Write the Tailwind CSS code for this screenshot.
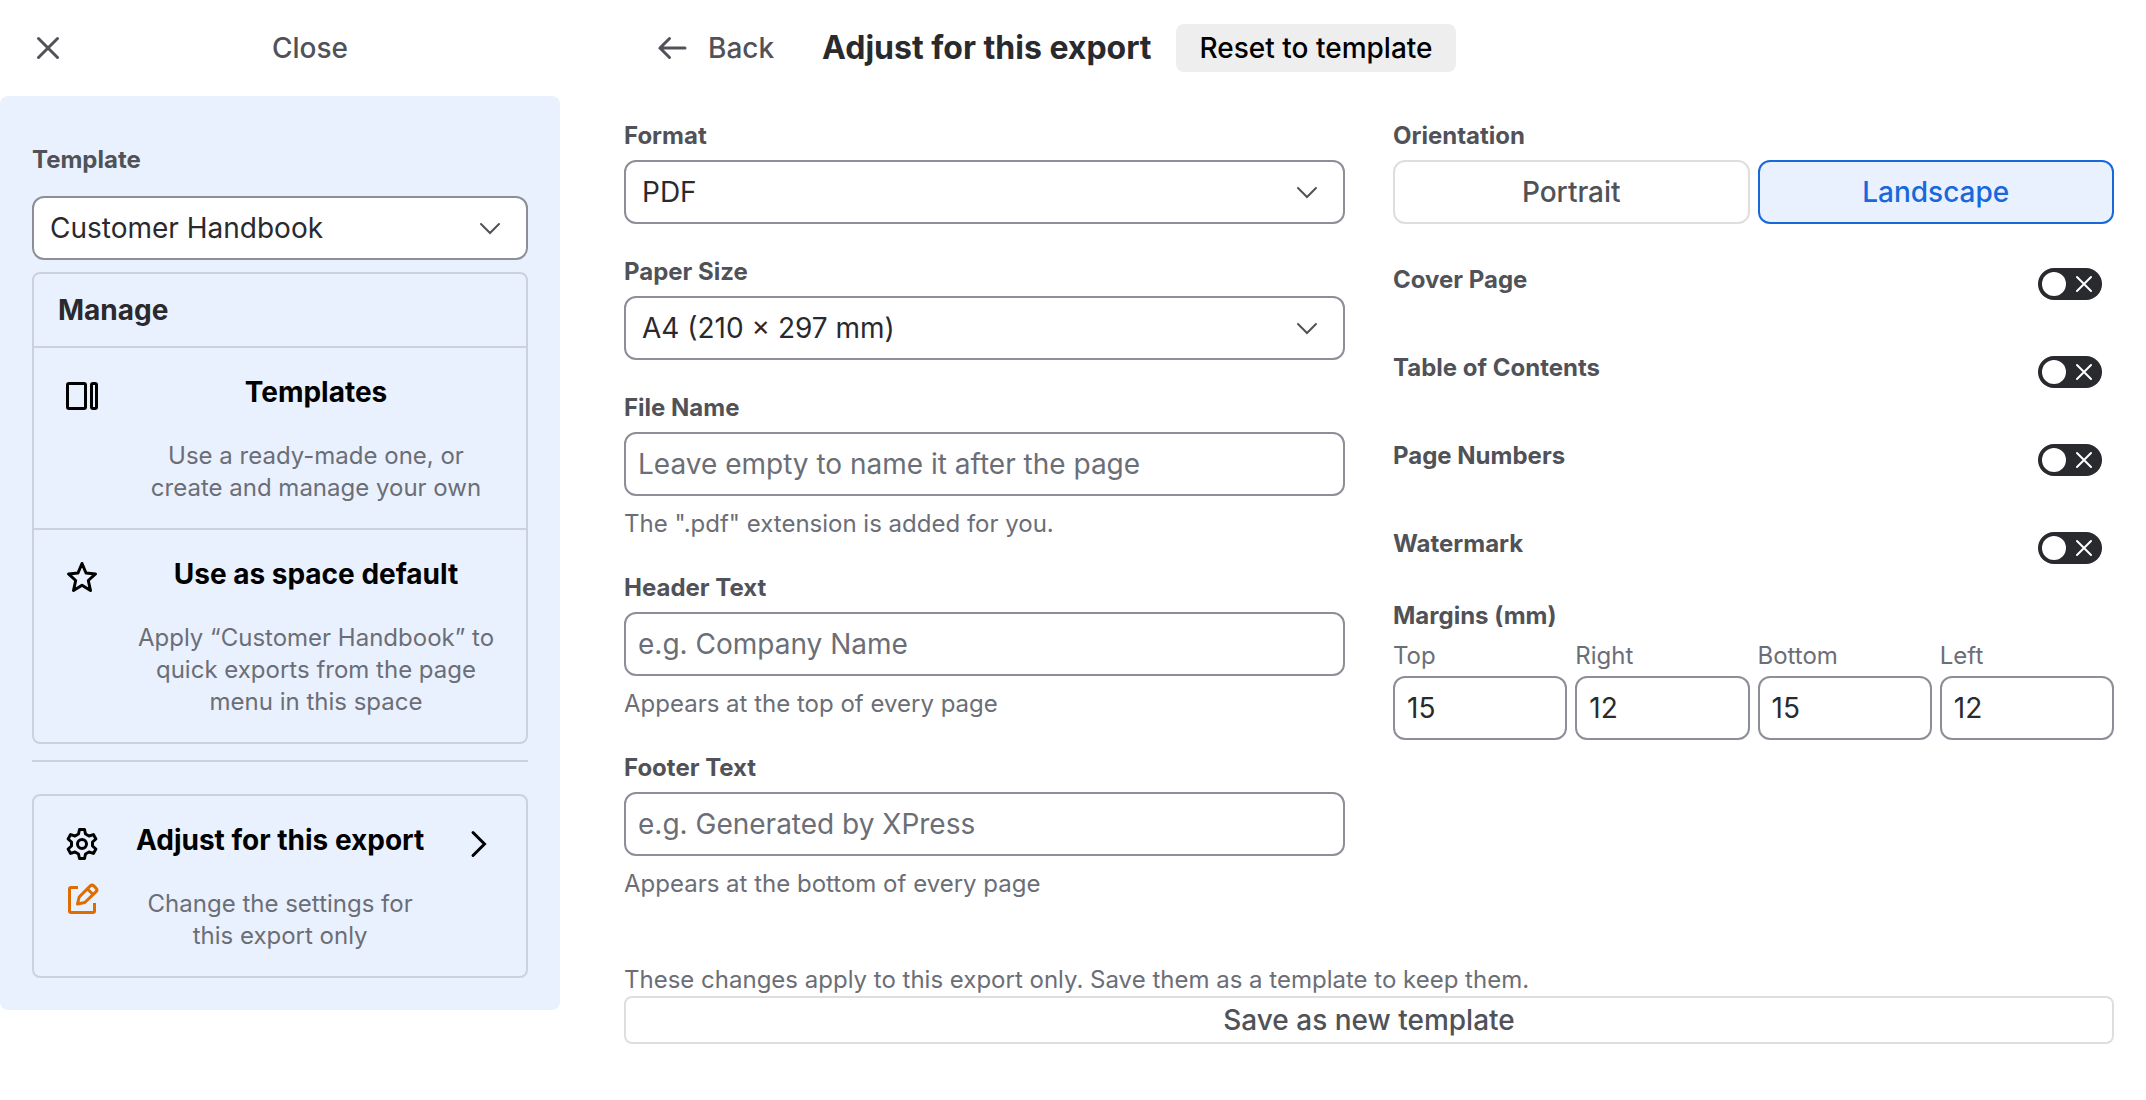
<!DOCTYPE html>
<html lang="en">
<head>
  <meta charset="UTF-8">
  <meta name="viewport" content="width=device-width, initial-scale=1.0">
  <title>Adjust for this export</title>
  <script src="https://cdn.jsdelivr.net/npm/@tailwindcss/browser@4"></script>
</head>
<body class="bg-white font-['Inter',sans-serif] text-[28px] leading-10 text-[#292a2e]">
  <div class="flex items-start">

    <!-- Sidebar -->
    <aside class="w-[560px] shrink-0">
      <button type="button" class="flex h-24 w-full items-center gap-7 px-8 font-medium text-[#505258]">
        <svg class="size-8" viewBox="0 0 32 32" fill="none" stroke="currentColor" stroke-width="3" stroke-linecap="round"><path d="M6.5 6.5l19 19M25.5 6.5l-19 19"/></svg>
        <span class="flex-1 text-center">Close</span>
      </button>

      <div class="rounded-lg bg-[#eaf1fe] px-8 pt-12 pb-8">
        <label for="template" class="block text-2xl font-[653] text-[#505258]">Template</label>
        <div class="relative mt-5">
          <select id="template" class="h-16 w-full appearance-none rounded-xl border-2 border-[#8c8f97] bg-white px-4">
            <option>Customer Handbook</option>
          </select>
          <svg class="pointer-events-none absolute top-4 right-[22px] size-8" viewBox="0 0 32 32" fill="none" stroke="#505258" stroke-width="2" stroke-linecap="round"><path d="M7 12l9 9 9-9"/></svg>
        </div>

        <section class="mt-3 rounded-lg border-2 border-[#0b120e]/14">
          <h2 class="px-6 py-4 font-[653]">Manage</h2>
          <button type="button" class="flex w-full items-start gap-9 border-t-2 border-[#0b120e]/14 px-[30px] py-6 text-black">
            <svg class="mt-1.5 size-9 shrink-0" viewBox="0 0 36 36" fill="none" stroke="currentColor" stroke-width="3"><rect x="3.5" y="5.5" width="18" height="25" rx="1.5"/><rect x="27.5" y="5.5" width="5" height="25" rx="1.5"/></svg>
            <span class="flex-1">
              <span class="block font-[653]">Templates</span>
              <span class="mt-7 block text-2xl text-[#6b6e76]">Use a ready-made one, or create and manage your own</span>
            </span>
          </button>
          <button type="button" class="flex w-full items-start gap-9 border-t-2 border-[#0b120e]/14 px-[30px] py-6 text-black">
            <svg class="mt-1.5 size-9 shrink-0" viewBox="0 0 36 36" fill="none" stroke="currentColor" stroke-width="3" stroke-linejoin="round"><path d="M18 3.5l4 9.500 9.500.9-7.200 6.600 2.200 10L18 25.300 9.500 30.500l2.200-10L4.500 13.900l9.500-.9z"/></svg>
            <span class="flex-1">
              <span class="block font-[653]">Use as space default</span>
              <span class="mt-7 block text-2xl text-[#6b6e76]">Apply “Customer Handbook” to quick exports from the page menu in this space</span>
            </span>
          </button>
        </section>

        <hr class="mt-4 mb-8 border-t-2 border-[#0b120e]/14">

        <button type="button" class="flex w-full items-start gap-9 rounded-lg border-2 border-[#0b120e]/14 px-[30px] py-6 text-black">
          <span class="mt-1.5 flex shrink-0 flex-col gap-5">
            <svg class="size-9" viewBox="0 0 36 36" fill="none" stroke="currentColor" stroke-width="3" stroke-linejoin="round"><path d="M15.500 3.500h5l1 4.500 3.500 2 4.400-1.400 2.500 4.400-3.400 3v4l3.400 3-2.500 4.400-4.400-1.400-3.500 2-1 4.500h-5l-1-4.500-3.500-2-4.400 1.400-2.500-4.400 3.400-3v-4l-3.400-3 2.500-4.400L11 10l3.500-2z"/><circle cx="18" cy="18" r="4.500"/></svg>
            <svg class="size-9" viewBox="0 0 36 36" fill="none" stroke="#e06c00" stroke-width="3" stroke-linejoin="round"><path d="M14 5.500H7a1.500 1.500 0 0 0-1.500 1.500v22A1.500 1.500 0 0 0 7 30.500h22a1.500 1.500 0 0 0 1.500-1.500v-8"/><path d="M13.500 22l1.700-7L26.300 3.900a2.500 2.500 0 0 1 3.500 0l2.300 2.300a2.500 2.500 0 0 1 0 3.500L20.800 20.500zM23.500 7l5.500 5.500"/></svg>
          </span>
          <span class="flex-1">
            <span class="block font-[653] whitespace-nowrap">Adjust for this export</span>
            <span class="mt-7 block text-2xl text-[#6b6e76]">Change the settings for this export only</span>
          </span>
          <svg class="mt-1.5 size-9 shrink-0" viewBox="0 0 36 36" fill="none" stroke="currentColor" stroke-width="3" stroke-linecap="round"><path d="M13 6.500l11.500 11.500L13 29.500"/></svg>
        </button>
      </div>
    </aside>

    <!-- Export settings -->
    <main class="min-w-0 flex-1 pr-8 pl-16">
      <header class="flex h-24 items-center gap-6 pl-8">
        <button type="button" class="flex items-center gap-5 pr-6 font-medium text-[#505258]">
          <svg class="size-8" viewBox="0 0 32 32" fill="none" stroke="currentColor" stroke-width="3" stroke-linecap="round"><path d="M29 16H4M13.500 6.500L4 16l9.500 9.500"/></svg>
          Back
        </button>
        <h1 class="text-[32px] font-[653]">Adjust for this export</h1>
        <button type="button" class="h-12 rounded-lg bg-[#eeeeee] px-6 font-medium text-black">Reset to template</button>
      </header>

      <div class="grid grid-cols-2 gap-12 pt-6">
        <div class="flex flex-col gap-8">
          <div>
            <label for="format" class="block text-2xl font-[653] text-[#505258]">Format</label>
            <div class="relative mt-2">
              <select id="format" class="h-16 w-full appearance-none rounded-xl border-2 border-[#8c8f97] bg-white px-4">
                <option>PDF</option>
              </select>
              <svg class="pointer-events-none absolute top-4 right-[22px] size-8" viewBox="0 0 32 32" fill="none" stroke="#505258" stroke-width="2" stroke-linecap="round"><path d="M7 12l9 9 9-9"/></svg>
            </div>
          </div>
          <div>
            <label for="paper" class="block text-2xl font-[653] text-[#505258]">Paper Size</label>
            <div class="relative mt-2">
              <select id="paper" class="h-16 w-full appearance-none rounded-xl border-2 border-[#8c8f97] bg-white px-4">
                <option>A4 (210 × 297 mm)</option>
              </select>
              <svg class="pointer-events-none absolute top-4 right-[22px] size-8" viewBox="0 0 32 32" fill="none" stroke="#505258" stroke-width="2" stroke-linecap="round"><path d="M7 12l9 9 9-9"/></svg>
            </div>
          </div>
          <div>
            <label for="filename" class="block text-2xl font-[653] text-[#505258]">File Name</label>
            <input id="filename" type="text" placeholder="Leave empty to name it after the page" class="mt-2 block h-16 w-full rounded-xl border-2 border-[#8c8f97] px-3 placeholder:text-[#6b6e76]">
            <p class="mt-3 text-2xl text-[#6b6e76]">The ".pdf" extension is added for you.</p>
          </div>
          <div>
            <label for="header" class="block text-2xl font-[653] text-[#505258]">Header Text</label>
            <input id="header" type="text" placeholder="e.g. Company Name" class="mt-2 block h-16 w-full rounded-xl border-2 border-[#8c8f97] px-3 placeholder:text-[#6b6e76]">
            <p class="mt-3 text-2xl text-[#6b6e76]">Appears at the top of every page</p>
          </div>
          <div>
            <label for="footer" class="block text-2xl font-[653] text-[#505258]">Footer Text</label>
            <input id="footer" type="text" placeholder="e.g. Generated by XPress" class="mt-2 block h-16 w-full rounded-xl border-2 border-[#8c8f97] px-3 placeholder:text-[#6b6e76]">
            <p class="mt-3 text-2xl text-[#6b6e76]">Appears at the bottom of every page</p>
          </div>
        </div>

        <div>
          <h3 class="text-2xl font-[653] text-[#505258]">Orientation</h3>
          <div class="mt-2 grid grid-cols-2 gap-2 font-medium">
            <button type="button" class="h-16 rounded-xl border-2 border-[#0b120e]/14 text-[#505258]">Portrait</button>
            <button type="button" class="h-16 rounded-xl border-2 border-[#1868db] bg-[#eaf1fe] text-[#1868db]">Landscape</button>
          </div>

          <div class="mt-8 flex flex-col gap-8 text-2xl font-[653] text-[#505258]">
            <div class="flex h-14 items-start justify-between pr-3">
              <label for="cover" class="pt-2">Cover Page</label>
              <span class="relative mt-3 h-8 w-16">
                <input id="cover" type="checkbox" role="switch" class="block h-8 w-16 appearance-none rounded-full bg-[#292a2e]">
                <svg class="pointer-events-none absolute inset-0" viewBox="0 0 64 32" fill="none"><circle cx="16" cy="16" r="12" fill="#fff"/><path d="M39 9l14 14M53 9l-14 14" stroke="#fff" stroke-width="2" stroke-linecap="round"/></svg>
              </span>
            </div>
            <div class="flex h-14 items-start justify-between pr-3">
              <label for="toc" class="pt-2">Table of Contents</label>
              <span class="relative mt-3 h-8 w-16">
                <input id="toc" type="checkbox" role="switch" class="block h-8 w-16 appearance-none rounded-full bg-[#292a2e]">
                <svg class="pointer-events-none absolute inset-0" viewBox="0 0 64 32" fill="none"><circle cx="16" cy="16" r="12" fill="#fff"/><path d="M39 9l14 14M53 9l-14 14" stroke="#fff" stroke-width="2" stroke-linecap="round"/></svg>
              </span>
            </div>
            <div class="flex h-14 items-start justify-between pr-3">
              <label for="numbers" class="pt-2">Page Numbers</label>
              <span class="relative mt-3 h-8 w-16">
                <input id="numbers" type="checkbox" role="switch" class="block h-8 w-16 appearance-none rounded-full bg-[#292a2e]">
                <svg class="pointer-events-none absolute inset-0" viewBox="0 0 64 32" fill="none"><circle cx="16" cy="16" r="12" fill="#fff"/><path d="M39 9l14 14M53 9l-14 14" stroke="#fff" stroke-width="2" stroke-linecap="round"/></svg>
              </span>
            </div>
            <div class="flex h-14 items-start justify-between pr-3">
              <label for="watermark" class="pt-2">Watermark</label>
              <span class="relative mt-3 h-8 w-16">
                <input id="watermark" type="checkbox" role="switch" class="block h-8 w-16 appearance-none rounded-full bg-[#292a2e]">
                <svg class="pointer-events-none absolute inset-0" viewBox="0 0 64 32" fill="none"><circle cx="16" cy="16" r="12" fill="#fff"/><path d="M39 9l14 14M53 9l-14 14" stroke="#fff" stroke-width="2" stroke-linecap="round"/></svg>
              </span>
            </div>
          </div>

          <h3 class="mt-6 text-2xl font-[653] text-[#505258]">Margins (mm)</h3>
          <div class="mt-2 grid grid-cols-4 gap-2">
            <div>
              <label for="top" class="block text-2xl text-[#6b6e76]">Top</label>
              <input id="top" type="text" inputmode="numeric" value="15" class="mt-1 block h-16 w-full rounded-xl border-2 border-[#8c8f97] px-3">
            </div>
            <div>
              <label for="right" class="block text-2xl text-[#6b6e76]">Right</label>
              <input id="right" type="text" inputmode="numeric" value="12" class="mt-1 block h-16 w-full rounded-xl border-2 border-[#8c8f97] px-3">
            </div>
            <div>
              <label for="bottom" class="block text-2xl text-[#6b6e76]">Bottom</label>
              <input id="bottom" type="text" inputmode="numeric" value="15" class="mt-1 block h-16 w-full rounded-xl border-2 border-[#8c8f97] px-3">
            </div>
            <div>
              <label for="left" class="block text-2xl text-[#6b6e76]">Left</label>
              <input id="left" type="text" inputmode="numeric" value="12" class="mt-1 block h-16 w-full rounded-xl border-2 border-[#8c8f97] px-3">
            </div>
          </div>
        </div>
      </div>

      <p class="mt-16 text-2xl text-[#6b6e76]">These changes apply to this export only. Save them as a template to keep them.</p>
      <button type="button" class="block h-12 w-full rounded-lg border-2 border-[#0b120e]/14 font-medium text-[#505258]">Save as new template</button>
    </main>
  </div>
</body>
</html>
